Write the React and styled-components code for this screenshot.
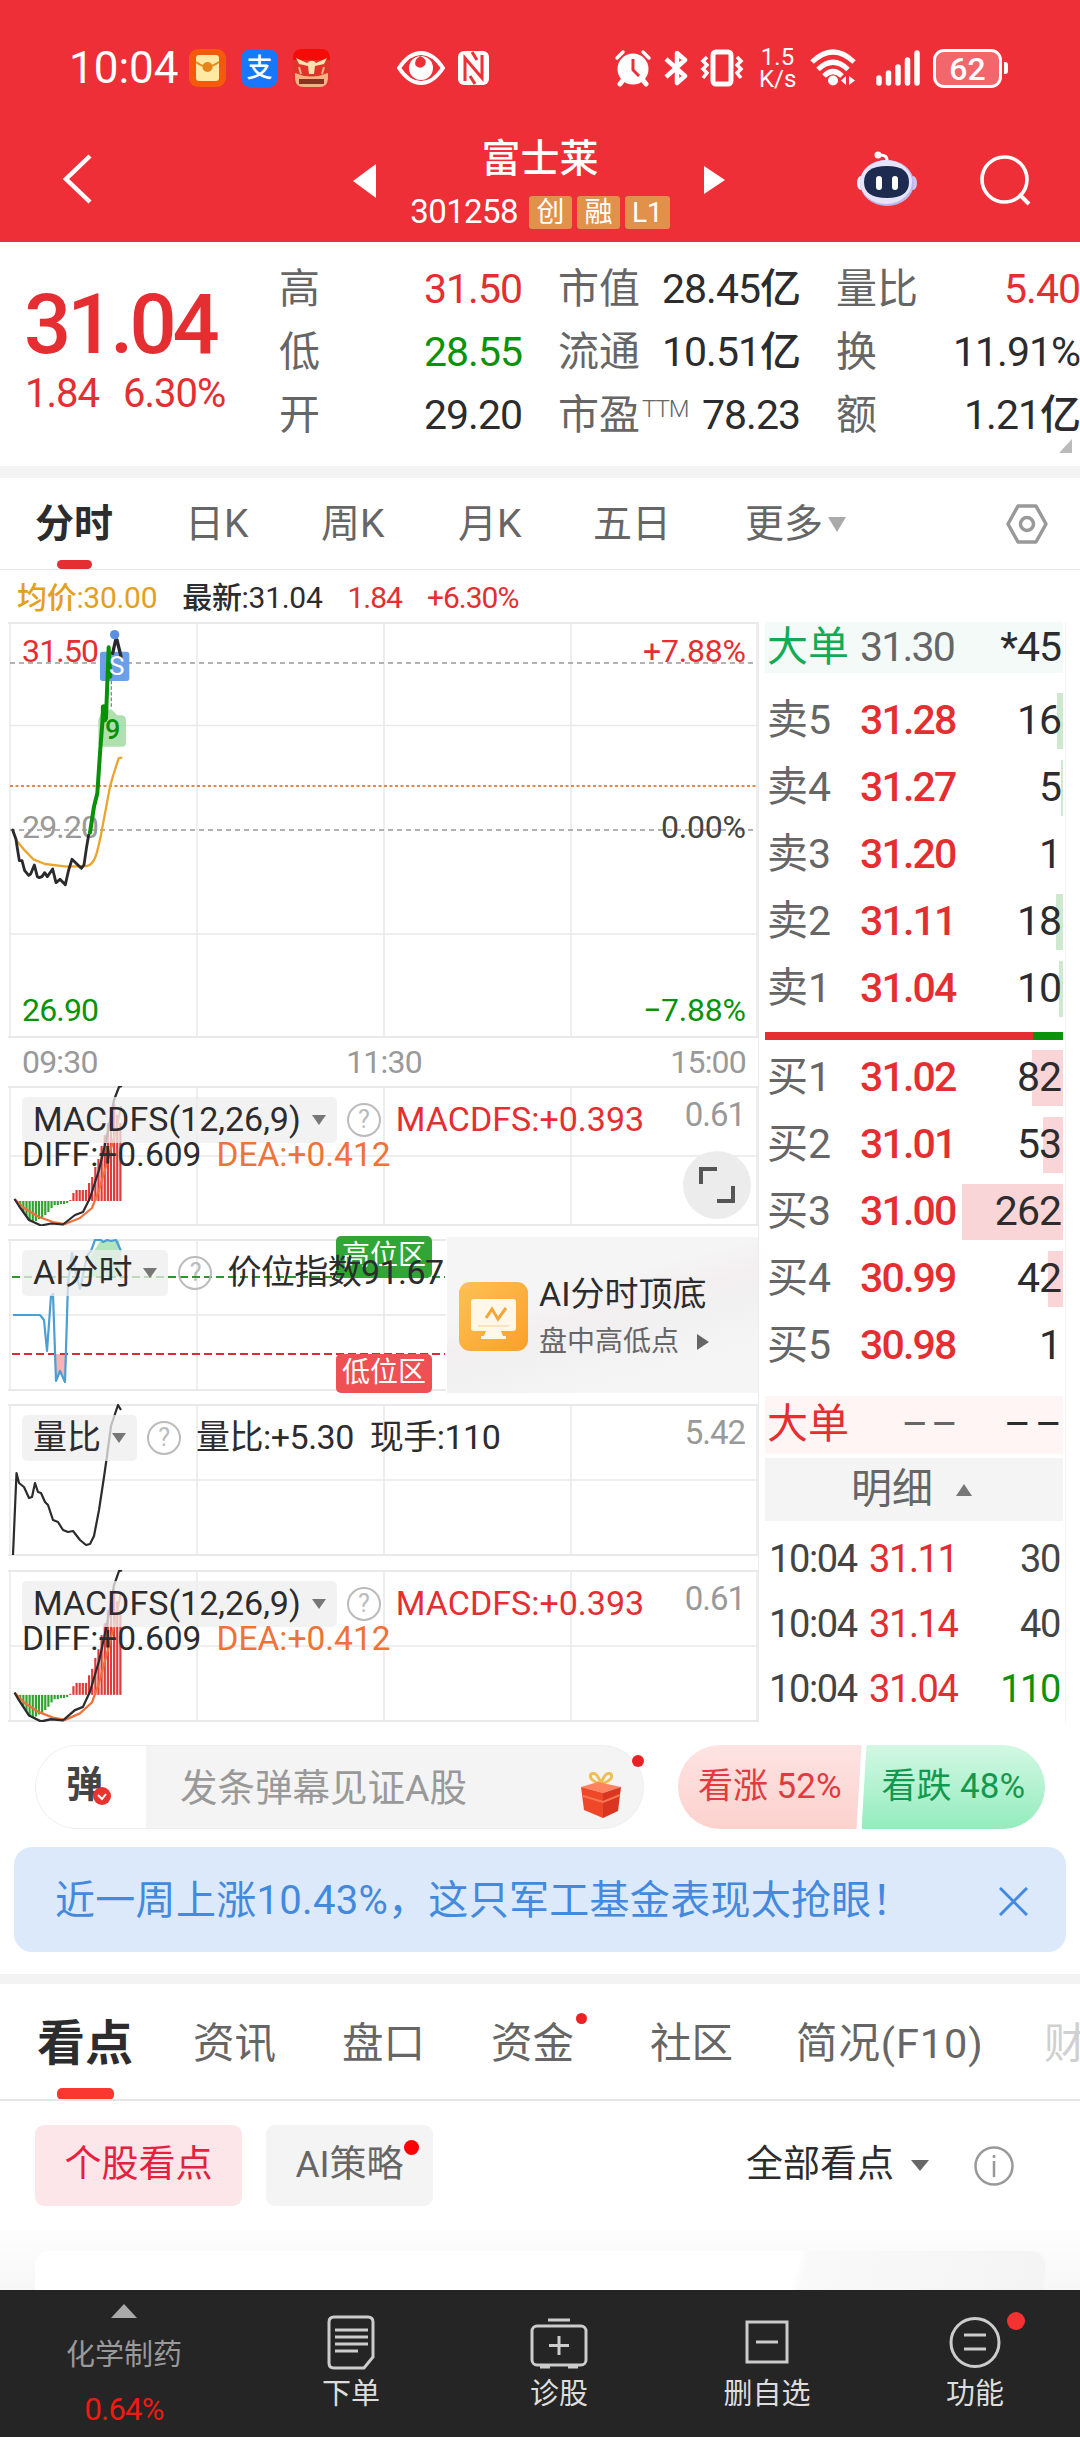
import styled, { createGlobalStyle } from 'styled-components'

const RED = '#e52e31'
const GREEN = '#0a930a'
const DARK = '#2c2c2e'
const GREY = '#666'

const GlobalStyle = createGlobalStyle`
  * {
    box-sizing: border-box;
  }
  body {
    margin: 0;
    background: #fff;
    font-family: Roboto, "Noto Sans CJK SC", sans-serif;
    line-height: 1.2;
    color: ${DARK};
  }
  svg {
    display: block;
    flex: none;
  }
`

const Page = styled.div`
  width: 1080px;
  height: 2437px;
  overflow: hidden;
  display: flex;
  flex-direction: column;
`

/* ---------- header ---------- */

const Header = styled.header`
  height: 242px;
  flex: none;
  background: #ee2f37;
  color: #fff;
`

const StatusBar = styled.div`
  height: 88px;
  padding: 48px 72px 0 69px;
  display: flex;
  align-items: center;
`

const Clock = styled.div`
  width: 120px;
  font-size: 44px;
  line-height: 40px;
  font-weight: 450;
`

const AppIcons = styled.div`
  display: flex;
  gap: 15px;
  width: 208px;
`

const StatusIcons = styled.div`
  display: flex;
  align-items: center;
  gap: 12px;
`

const RightIcons = styled(StatusIcons)`
  margin-left: auto;
`

const Speed = styled.div`
  font-size: 24px;
  font-weight: 450;
  line-height: 22px;
  text-align: center;
  width: 37px;
  margin: 0 2px 0 3px;
`

const SignalWrap = styled.div`
  margin-left: 7px;
`

const Battery = styled.div`
  width: 69px;
  height: 39px;
  border: 3px solid #fff;
  border-radius: 11px;
  background: #f3666c;
  font-size: 32px;
  font-weight: 500;
  line-height: 34px;
  text-align: center;
`

const BatteryTip = styled.div`
  width: 4px;
  height: 12px;
  margin-left: 2px;
  border-radius: 0 3px 3px 0;
  background: #fff;
`

const BatteryWrap = styled.div`
  display: flex;
  align-items: center;
`

const TitleBar = styled.div`
  height: 154px;
  padding: 45px 49px 0 62px;
  display: flex;
`

const IconSlot = styled.div`
  width: ${props => props.$w}px;
  padding-top: ${props => props.$top}px;
`

const StockTitle = styled.div`
  width: 328px;
  text-align: center;
`

const StockName = styled.div`
  font-size: 39px;
  font-weight: 500;
  line-height: 52px;
`

const StockCode = styled.div`
  display: flex;
  justify-content: center;
  align-items: center;
  gap: 5px;
  font-size: 33px;
  font-weight: 450;
  line-height: 34px;
  padding-top: 10px;
  letter-spacing: -0.6px;
  height: 44px;
`

const Badge = styled.span`
  min-width: 43px;
  height: 33px;
  padding: 0 7px;
  border-radius: 3px;
  background: #e1914a;
  font-size: 28px;
  font-weight: 400;
  line-height: 34px;
  letter-spacing: 0;
  &:first-of-type {
    margin-left: 6px;
  }
`

/* ---------- quote ---------- */

const Quote = styled.section`
  height: 224px;
  flex: none;
  display: flex;
  padding-top: 16px;
  position: relative;
`

const PriceBlock = styled.div`
  width: 279px;
  padding: 22px 0 0 24px;
  color: ${RED};
`

const Price = styled.div`
  font-size: 83px;
  font-weight: 500;
  line-height: 90px;
  letter-spacing: -4px;
`

const Change = styled.div`
  display: flex;
  gap: 24px;
  font-size: 40px;
  font-weight: 450;
  line-height: 48px;
  letter-spacing: -1px;
  padding-left: 1px;
`

const QuoteGrid = styled.div`
  display: grid;
  grid-template-columns: 242px 241px 243px;
  grid-auto-rows: 63px;
  column-gap: 37px;
`

const Cell = styled.div`
  display: flex;
  justify-content: space-between;
  align-items: center;
  font-size: 41px;
  white-space: nowrap;
`

const CellLabel = styled.span`
  color: ${GREY};
  sup {
    font-size: 24px;
    line-height: 0;
    vertical-align: 12px;
    margin-left: 2px;
    letter-spacing: -1px;
    font-weight: 300;
  }
`

const CellValue = styled.span`
  color: ${props => props.$color || DARK};
  font-size: 41px;
  font-weight: 450;
  letter-spacing: -1px;
  margin-right: -1px;
`

const Corner = styled.div`
  position: absolute;
  right: 8px;
  bottom: 13px;
  border-left: 13px solid transparent;
  border-bottom: 14px solid #bbb;
`

const Band = styled.div`
  height: ${props => props.$h}px;
  flex: none;
  background: #f3f3f3;
`

/* ---------- period tabs ---------- */

const PeriodTabs = styled.nav`
  height: 92px;
  flex: none;
  padding-left: 35px;
  display: flex;
  align-items: center;
  border-bottom: 1px solid #e9e9e9;
`

const Period = styled.div`
  width: ${props => props.$w}px;
  height: 91px;
  display: flex;
  align-items: center;
  gap: 5px;
  padding-top: 1px;
  font-size: 39px;
  color: ${props => (props.$active ? DARK : GREY)};
  font-weight: ${props => (props.$active ? 700 : 400)};
  position: relative;
`

const Underline = styled.div`
  position: absolute;
  left: ${props => props.$left}px;
  bottom: ${props => props.$bottom || 0}px;
  width: ${props => props.$w}px;
  height: ${props => props.$h}px;
  border-radius: 5px;
  background: ${props => props.$color};
`

const Triangle = styled.i`
  display: inline-block;
  flex: none;
  border-left: ${props => props.$s}px solid transparent;
  border-right: ${props => props.$s}px solid transparent;
  border-${props => (props.$up ? 'bottom' : 'top')}: ${props => props.$h}px solid ${props => props.$color || '#777'};
`

/* ---------- market area ---------- */

const Market = styled.section`
  height: 1153px;
  flex: none;
  display: flex;
`

const Charts = styled.div`
  width: 758px;
  padding-left: 8px;
`

const Summary = styled.div`
  height: 52px;
  padding: 4px 0 0 9px;
  display: flex;
  align-items: center;
  gap: 25px;
  font-size: 30px;
  font-weight: 450;
  letter-spacing: -0.3px;
`

const Tint = styled.span`
  color: ${props => props.$color};
  letter-spacing: ${props => props.$tight ? '-1px' : 'inherit'};
`

const TimeAxis = styled.div`
  height: 48px;
  padding: 0 12px 0 14px;
  display: flex;
  justify-content: space-between;
  align-items: center;
  font-size: 32px;
  letter-spacing: -0.8px;
  color: #999;
`

const Panel = styled.div`
  position: relative;
  height: ${props => props.$h}px;
  margin-bottom: ${props => props.$gap || 0}px;
`

const Overlay = styled.div`
  position: absolute;
  inset: 0;
  padding: 10px 13px 0 14px;
`

const OverlayRow = styled.div`
  display: flex;
  align-items: center;
  height: 47px;
  font-size: 34px;
  letter-spacing: ${props => props.$ls || 0}px;
  white-space: nowrap;
`

const Chip = styled.div`
  height: 46px;
  padding: 0 11px;
  display: flex;
  align-items: center;
  gap: 11px;
  border-radius: 5px;
  background: rgba(238, 238, 238, 0.75);
  margin-right: 10px;
  letter-spacing: 0;
`

const Help = styled.div`
  width: 34px;
  height: 34px;
  flex: none;
  border: 2px solid #bbb;
  border-radius: 50%;
  color: #bbb;
  font-size: 25px;
  line-height: 30px;
  text-align: center;
  margin-right: 15px;
`

const MaxValue = styled.span`
  margin-left: auto;
  font-size: 33px;
  color: #999;
  letter-spacing: -1px;
  padding-bottom: 9px;
`

const DiffRow = styled.div`
  display: flex;
  gap: 15px;
  font-size: 33.5px;
  line-height: 24px;
`

const Expand = styled.div`
  position: absolute;
  right: 7px;
  top: 65px;
  width: 68px;
  height: 68px;
  border-radius: 50%;
  background: #ececec;
  display: flex;
  align-items: center;
  justify-content: center;
`

const AiPanel = styled.div`
  position: relative;
  display: flex;
  height: 152px;
  margin: 13px 0;
`

const Zone = styled.div`
  position: absolute;
  left: 328px;
  top: ${props => props.$top}px;
  width: 96px;
  height: ${props => props.$h}px;
  border-radius: 5px;
  background: ${props => props.$color};
  color: #fff;
  font-size: 28px;
  line-height: ${props => props.$h - 2}px;
  text-align: center;
`

const Promo = styled.div`
  width: 311px;
  height: 156px;
  margin-top: -2px;
  padding: 2px 0 0 12px;
  display: flex;
  align-items: center;
  gap: 11px;
  background: linear-gradient(165deg, #f5f5f5 35%, #f3eff0 48%, #f1f1f1 60%, #f5f5f5 80%);
`

const PromoText = styled.div`
  padding-top: 4px;
`

const PromoTitle = styled.div`
  font-size: 34px;
  line-height: 48px;
  white-space: nowrap;
`

const PromoSub = styled.div`
  display: flex;
  align-items: center;
  gap: 18px;
  font-size: 28px;
  line-height: 48px;
  color: ${GREY};
`

const Play = styled.i`
  border-top: 8px solid transparent;
  border-bottom: 8px solid transparent;
  border-left: 12px solid #666;
`

/* ---------- order book ---------- */

const Book = styled.div`
  width: 308px;
  margin-top: 52px;
  padding: 0 2px 0 6px;
  border-left: 1px solid #ececec;
  border-right: 1px solid #f3f3f3;
`

const BigOrder = styled.div`
  height: ${props => props.$h}px;
  margin: ${props => props.$margin};
  background: ${props => props.$bg};
  padding: 0 2px;
  display: flex;
  align-items: center;
  font-size: 41px;
`

const Level = styled.div`
  height: 67px;
  padding: 0 2px;
  display: flex;
  align-items: center;
  font-size: 41px;
  position: relative;
`

const Side = styled.span`
  width: 93px;
  white-space: nowrap;
  color: ${props => props.$color || GREY};
`

const LevelPrice = styled.span`
  width: 96px;
  font-size: 41px;
  letter-spacing: -1.8px;
  font-weight: ${props => (props.$color ? 400 : 500)};
  color: ${props => props.$color || RED};
  white-space: nowrap;
`

const EmptyPrice = styled(LevelPrice)`
  text-align: right;
  word-spacing: -4px;
`

const Volume = styled.span`
  margin-left: auto;
  font-size: 41px;
  font-weight: 450;
  letter-spacing: -1px;
  word-spacing: -4px;
  position: relative;
`

const DepthBar = styled.div`
  position: absolute;
  right: 0;
  top: 6px;
  height: 56px;
  background: ${props => props.$color};
`

const Ratio = styled.div`
  height: 8px;
  margin: 10px 0 4px;
  display: flex;
  background: ${GREEN};
`

const RatioBuy = styled.div`
  width: 268px;
  background: ${RED};
`

const DetailHead = styled.div`
  height: 63px;
  margin-bottom: 5px;
  padding-right: 5px;
  background: #f4f4f4;
  display: flex;
  align-items: center;
  justify-content: center;
  gap: 23px;
  font-size: 41px;
  color: ${GREY};
`

const Trade = styled.div`
  height: 65px;
  padding: 2px 3px 0 4px;
  display: flex;
  align-items: center;
  font-size: 38px;
  font-weight: 450;
  letter-spacing: -1.4px;
  color: #444;
`

const TradeCell = styled.span`
  width: ${props => props.$w}px;
  margin-left: ${props => (props.$w ? 0 : 'auto')};
  color: ${props => props.$color};
`

/* ---------- comment bar and banner ---------- */

const CommentRow = styled.div`
  height: 84px;
  margin-top: 22px;
  padding: 0 35px;
  display: flex;
  justify-content: space-between;
  flex: none;
`

const CommentBox = styled.div`
  width: 609px;
  display: flex;
  border: 1px solid #eee;
  border-radius: 42px;
  background: #f4f4f4;
  position: relative;
`

const Danmu = styled.div`
  width: 110px;
  border-radius: 42px 0 0 42px;
  background: #fff;
  padding-left: 30px;
  font-size: 37px;
  font-weight: 700;
  line-height: 79px;
  color: #444;
  position: relative;
`

const DanmuCheck = styled.div`
  position: absolute;
  left: 57px;
  top: 41px;
`

const Placeholder = styled.div`
  flex: 1;
  padding-left: 34px;
  font-size: 37.5px;
  line-height: 85px;
  color: #999;
`

const Gift = styled.div`
  padding: 26px 21px 0 0;
`

const Dot = styled.i`
  position: absolute;
  left: ${props => props.$x}px;
  top: ${props => props.$y}px;
  width: ${props => props.$s}px;
  height: ${props => props.$s}px;
  border-radius: 50%;
  background: ${props => props.$color || '#ea2226'};
`

const Votes = styled.div`
  display: flex;
  width: 367px;
  border-radius: 42px;
  overflow: hidden;
`

const Vote = styled.div`
  flex: 1;
  font-size: 35px;
  line-height: 83px;
  text-align: center;
  color: ${props => (props.$up ? '#e33a40' : '#12994f')};
  background: ${props => (props.$up ? 'linear-gradient(#fee3e3, #fbd2cd)' : 'linear-gradient(#d3f8e4, #93ecbd)')};
  clip-path: ${props => (props.$up
    ? 'polygon(0 0, 100% 0, calc(100% - 5px) 100%, 0 100%)'
    : 'polygon(5px 0, 100% 0, 100% 100%, 0 100%)')};
`

const Banner = styled.div`
  height: 105px;
  margin: 18px 14px 22px;
  padding: 3px 38px 0 41px;
  flex: none;
  display: flex;
  align-items: center;
  justify-content: space-between;
  border-radius: 18px;
  background: #dbe9fa;
  color: #4389de;
  font-size: 40px;
  letter-spacing: 0.3px;
  white-space: nowrap;
`

/* ---------- lower tabs ---------- */

const TopicTabs = styled.nav`
  height: 117px;
  flex: none;
  padding-left: 37px;
  display: flex;
  border-bottom: 2px solid #e6e6e6;
  overflow: hidden;
`

const Topic = styled.div`
  width: ${props => props.$w}px;
  flex: none;
  position: relative;
  font-size: ${props => (props.$active ? 48 : 41.5)}px;
  font-weight: ${props => (props.$active ? 700 : 400)};
  line-height: 120px;
  color: ${props => (props.$faded ? '#d0d0d0' : props.$active ? DARK : GREY)};
  letter-spacing: ${props => (props.$wide ? 0.9 : 0)}px;
  white-space: nowrap;
`

const Filters = styled.div`
  height: 130px;
  flex: none;
  padding: 24px 66px 0 35px;
  display: flex;
  align-items: flex-start;
`

const FilterChip = styled.div`
  width: ${props => props.$w}px;
  height: 81px;
  margin-right: 24px;
  border-radius: 9px;
  background: ${props => (props.$active ? '#fde6ea' : '#f4f4f4')};
  color: ${props => (props.$active ? '#e6203f' : GREY)};
  font-size: 37px;
  line-height: 80px;
  text-align: center;
  position: relative;
`

const Sort = styled.div`
  height: 81px;
  margin-left: auto;
  margin-right: 45px;
  display: flex;
  align-items: center;
  gap: 17px;
  font-size: 37px;
`

const Info = styled.div`
  margin-top: 21px;
`

const CardArea = styled.div`
  flex: 1;
  padding: 20px 35px 0;
  background: linear-gradient(#fdfdfd, #f7f7f7);
`

const Card = styled.div`
  height: 100%;
  border-radius: 14px 14px 0 0;
  background: linear-gradient(105deg, #fff 75%, #f9f9f9 76%, #f4f4f4);
`

/* ---------- bottom bar ---------- */

const BottomBar = styled.footer`
  height: 147px;
  flex: none;
  background: #252525;
  color: #ddd;
  display: flex;
`

const Sector = styled.div`
  width: 248px;
  padding-top: 14px;
  display: flex;
  flex-direction: column;
  align-items: center;
`

const SectorName = styled.div`
  font-size: 29px;
  line-height: 40px;
  margin-top: 17px;
  color: #999;
`

const SectorChange = styled.div`
  font-size: 31px;
  line-height: 40px;
  margin-top: 15px;
  letter-spacing: -0.8px;
  color: #f01a12;
`

const Action = styled.div`
  flex: 1;
  padding: 24px 2px 0 0;
  display: flex;
  flex-direction: column;
  align-items: center;
  gap: 3px;
  font-size: 29px;
  line-height: 42px;
  position: relative;
`

const periods = [
  ['分时', 150],
  ['日K', 136],
  ['周K', 137],
  ['月K', 135],
  ['五日', 152],
]

const topics = [
  ['看点', 156],
  ['资讯', 149],
  ['盘口', 149],
  ['资金', 159],
  ['社区', 146],
  ['简况(F10)', 248],
  ['财', 90],
]

const sells = [
  ['卖5', '31.28', '16', 6],
  ['卖4', '31.27', '5', 2],
  ['卖3', '31.20', '1', 0],
  ['卖2', '31.11', '18', 7],
  ['卖1', '31.04', '10', 4],
]

const buys = [
  ['买1', '31.02', '82', 31],
  ['买2', '31.01', '53', 20],
  ['买3', '31.00', '262', 101],
  ['买4', '30.99', '42', 15],
  ['买5', '30.98', '1', 0],
]

const trades = [
  ['31.11', '30', '#444'],
  ['31.14', '40', '#444'],
  ['31.04', '110', GREEN],
]

const macdBars = [
  -2, -5, -11, -15, -19, -21, -20, -18, -17, -14, -11, -7, -4, -4, -3, -3, -2,
  1, 8, 11, 11, 11, 11, 18, 24, 34, 42, 55, 66, 78, 90, 97, 86, 78,
]

const Grid = ({ w = 750, h, rows = [] }) => (
  <g stroke="#e9e9e9" strokeWidth="1.5" fill="none">
    <path d={`M0 1H${w}M0 ${h - 1}H${w}`} strokeWidth="2" />
    {[2, 189, 376, 563, 749].filter(x => x <= w).map(x => <path key={x} d={`M${x} 0V${h}`} />)}
    {rows.map(y => <path key={y} d={`M2 ${y}H${w}`} />)}
  </g>
)

const PriceChart = () => (
  <svg width="750" height="416" viewBox="0 0 750 416" fontFamily="Roboto" fontSize="32" fontWeight="450">
    <Grid h={416} rows={[103.5, 312]} />
    <path d="M2 41H748M2 208H748" stroke="#999" strokeWidth="1.5" strokeDasharray="5 4" />
    <path d="M2 164H748" stroke="#e08a50" strokeWidth="2" strokeDasharray="3 2.5" />
    <text x="14" y="40" fill={RED} textLength="77">31.50</text>
    <text x="14" y="216" fill="#999" textLength="77">29.20</text>
    <g transform="translate(-8 -12) scale(.3333)" fill="none" strokeLinejoin="round" strokeLinecap="round">
      <path d="M306 300L334 298L352 316H366Q378 318 378 330V398Q378 410 366 410H307Q295 410 295 398V330Z" fill="#8ed38e" opacity=".7" />
      <path d="M334 213V298" stroke="#888" strokeWidth="4" strokeDasharray="8 9" />
      <path d="M48 690L75 722L100 748L135 762L200 770L262 768C288 760 292 720 302 680L330 530L340 495L356 445L364 443" stroke="#eaa52c" strokeWidth="7" />
      <path d="M38 660L48 688L52 715L58 752L66 752L74 782L86 796L92 792L103 765L112 800L118 803L126 800L134 788L142 800L158 777L168 818L180 808L196 824L206 780L216 748L244 775L252 765L260 710L266 675" stroke="#2a2a2e" strokeWidth="8.5" />
      <rect x="300" y="125" width="88" height="88" rx="8" fill="#6c9fe9" />
      <path d="M338 130L347 90L351 90L363 140" stroke="#2a2a2e" strokeWidth="10" />
      <path d="M270 668L282 590L292 550L300 430L310 300L318 325L326 112L331 200" stroke="#099009" strokeWidth="12" />
      <path d="M312 292V328" stroke="#099009" strokeWidth="19" />
      <circle cx="344" cy="74" r="14" fill="#5b8fe2" stroke="none" />
    </g>
    <text x="101" y="53" fontSize="26" fill="#fff">S</text>
    <text x="97" y="117" fontSize="27" fontWeight="500" fill="#099009">9</text>
    <g textAnchor="end">
      <text x="738" y="40" fill={RED} textLength="103">+7.88%</text>
      <text x="738" y="216" fill="#444" textLength="85">0.00%</text>
      <text x="738" y="399" fill={GREEN} textLength="103">−7.88%</text>
    </g>
    <text x="14" y="399" fill={GREEN} textLength="77">26.90</text>
  </svg>
)

const Macd = ({ h }) => (
  <Panel $h={h}>
    <svg width="750" height={h} viewBox={`0 0 750 ${h}`}>
      <Grid h={h} rows={[h / 2]} />
      <g transform={`scale(1 ${h / 140})`} fill="none" strokeLinejoin="round">
        {macdBars.map((v, i) => (
          <rect
            key={i}
            x={8 + i * 3.13}
            y={v < 0 ? 115 : 115 - v}
            width="2.2"
            height={Math.abs(v)}
            fill={v < 0 ? '#2fa52f' : '#de3b3b'}
          />
        ))}
        <path d="M6.500 113L16 122L31 131L45 136L57 138L72 132L84 122L91 104L101 70L108 44L113 20" stroke="#f0703a" strokeWidth="2.2" />
        <path d="M6.500 113L11 120L21 134L33 139.500L43 137.500L55 138.500L67 129L75 126L82 112L91 84L99 50L106 14L111 1L114 0" stroke="#2c2c2e" strokeWidth="2.2" />
      </g>
    </svg>
    <Overlay>
      <OverlayRow>
        <Chip>
          MACDFS(12,26,9)
          <Triangle $s={7} $h={10} />
        </Chip>
        <Help>?</Help>
        <Tint $color={RED}>MACDFS:+0.393</Tint>
        <MaxValue>0.61</MaxValue>
      </OverlayRow>
      <DiffRow>
        <span>DIFF:+0.609</span>
        <Tint $color="#ee7338">DEA:+0.412</Tint>
      </DiffRow>
    </Overlay>
  </Panel>
)

const AiChart = () => (
  <svg width="439" height="152" viewBox="0 0 439 152">
    <Grid w={438} h={152} rows={[76]} />
    <path d="M80 38L83 16L86 12L92 2H93L101 0L105 2L111 1L113 13V38Z" fill="#b4e6bd" />
    <path d="M46 115L48 142L52 132L57 143L59 115Z" fill="#f8b4b4" />
    <path d="M4 38H437" stroke="#2c962c" strokeWidth="2" strokeDasharray="8 4" />
    <path d="M4 115H437" stroke="#db2b35" strokeWidth="2" strokeDasharray="8 4" />
    <path
      d="M5 76H32L36 81L39 112L43 57L45 55L48 142L52 132L57 143L60 44L64 14L67 30L72 50L79 17L83 12L87 1L93 1L95 3L99 1L103 2L108 1L113 12"
      fill="none"
      stroke="#4a9fd4"
      strokeWidth="2.2"
      strokeLinejoin="round"
    />
  </svg>
)

const VolumeRatio = () => (
  <Panel $h={152} $gap={14}>
    <svg width="750" height="152" viewBox="0 0 750 152">
      <Grid h={152} rows={[76]} />
      <path
        d="M5 151L8.500 69L11 79L16 83L21 94L24 93L27 79L30 88L33 89L37 98L40 101L45 116L50 118L55 126L60 128L65 127L72 136L78 141L82 140L86 132L91 106L96 73L99 52L103 22L110 1L113 6"
        fill="none"
        stroke="#2c2c2e"
        strokeWidth="2.2"
        strokeLinejoin="round"
      />
    </svg>
    <Overlay>
      <OverlayRow $ls={-0.5}>
        <Chip>
          量比
          <Triangle $s={7} $h={10} />
        </Chip>
        <Help>?</Help>
        <span>量比:+5.30&nbsp; 现手:110</span>
        <MaxValue>5.42</MaxValue>
      </OverlayRow>
    </Overlay>
  </Panel>
)

const Levels = ({ rows, color }) => rows.map(([side, price, volume, bar]) => (
  <Level key={side}>
    <DepthBar $color={color} style={{ width: bar }} />
    <Side>{side}</Side>
    <LevelPrice>{price}</LevelPrice>
    <Volume>{volume}</Volume>
  </Level>
))

const StatusRow = () => (
  <StatusBar>
    <Clock>10:04</Clock>
    <AppIcons>
      <svg width="37" height="38" viewBox="0 0 37 38">
        <rect width="37" height="38" rx="9" fill="#f45a0a" />
        <rect x="7" y="6" width="23" height="26" rx="3" fill="#ffe9a5" />
        <path d="M7 13Q18 22 30 13" fill="none" stroke="#e38d24" strokeWidth="2" />
        <circle cx="18.500" cy="18" r="5" fill="#e5851b" />
      </svg>
      <svg width="37" height="38" viewBox="0 0 37 38">
        <rect width="37" height="38" rx="9" fill="#1677ff" />
        <text x="18.500" y="28" fontSize="26" fontWeight="500" fill="#fff" textAnchor="middle" fontFamily="Noto Sans CJK SC">支</text>
      </svg>
      <svg width="37" height="38" viewBox="0 0 37 38">
        <rect width="37" height="38" rx="9" fill="#e0332a" />
        <path d="M0 11V9Q0 0 9 0H28Q37 0 37 9V11Z" fill="#f50b08" />
        <path d="M3 9L14 14L17 12H21L23 14L34 9L31 15L22 17L21 25H16L15 17L6 15Z" fill="#ffe0b0" />
        <path d="M6 18L8 25M31 18L29 25" stroke="#f4b183" strokeWidth="2" />
        <path d="M2 24Q18 31 35 24V30Q34 38 27 38H10Q3 38 2 30Z" fill="#f4b183" />
        <rect x="6" y="30" width="25" height="5" fill="#8a3320" />
      </svg>
    </AppIcons>
    <StatusIcons>
      <svg width="48" height="36" viewBox="0 0 48 36">
        <path d="M2 18Q12 3 24 3Q36 3 46 18Q36 33 24 33Q12 33 2 18Z" fill="none" stroke="#fff" strokeWidth="4" />
        <circle cx="24" cy="18" r="12" fill="#fff" />
        <path d="M23 6Q31 9 28 15Q24 20 19 16Q16 11 23 6Z" fill="#ee2f37" />
      </svg>
      <svg width="33" height="36" viewBox="0 0 33 36">
        <rect x="1" y="1" width="31" height="34" rx="6" fill="#fff" />
        <path d="M8 31V8L25 28V5M15 2L20 10M13 26L18 34" stroke="#ee2f37" strokeWidth="3" fill="none" />
      </svg>
    </StatusIcons>
    <RightIcons>
      <svg width="38" height="38" viewBox="0 0 38 38">
        <circle cx="19" cy="20" r="15.500" fill="#fff" />
        <path d="M3 9L9 3M35 9L29 3" stroke="#fff" strokeWidth="3.500" strokeLinecap="round" />
        <path d="M10 30L6 35M28 30L32 35" stroke="#fff" strokeWidth="5" strokeLinecap="round" />
        <path d="M19 10V21L25 27" fill="none" stroke="#ee2f37" strokeWidth="3" />
      </svg>
      <svg width="24" height="38" viewBox="0 0 24 38">
        <path d="M2 10L21 27L13 34V4L21 11L2 28" fill="none" stroke="#fff" strokeWidth="4.500" strokeLinejoin="round" />
      </svg>
      <svg width="44" height="38" viewBox="0 0 44 38">
        <rect x="13" y="3" width="18" height="32" rx="3" fill="none" stroke="#fff" strokeWidth="5" />
        <path d="M7 8L3 12L7 16L3 20L7 24L3 29M37 8L41 12L37 16L41 20L37 24L41 29" fill="none" stroke="#fff" strokeWidth="3.500" />
      </svg>
      <Speed>1.5<br />K/s</Speed>
      <svg width="46" height="38" viewBox="0 0 46 38">
        <path d="M2 13Q23 -7 44 13M8 20.500Q23 6 38 20.500M14 27Q23 18 32 27" fill="none" stroke="#fff" strokeWidth="5" />
        <circle cx="23" cy="31.500" r="5" fill="#fff" />
        <path d="M36 27L31 31.500L36 36ZM39 27L45 31.500L39 36Z" fill="#fff" />
      </svg>
      <SignalWrap>
        <svg width="46" height="38" viewBox="0 0 46 38">
          <path d="M4 29V34M13.500 24V34M23 18V34M32.500 11V34M42 4V34" stroke="#fff" strokeWidth="5.500" strokeLinecap="round" />
        </svg>
      </SignalWrap>
      <BatteryWrap>
        <Battery>62</Battery>
        <BatteryTip />
      </BatteryWrap>
    </RightIcons>
  </StatusBar>
)

const App = () => {
  return (
    <Page>
      <GlobalStyle />
      <Header>
        <StatusRow />
        <TitleBar>
          <IconSlot $w={291} $top={20}>
            <svg width="32" height="52" viewBox="0 0 32 52">
              <path d="M28 3L4 26L28 49" fill="none" stroke="#fff" strokeWidth="4.500" />
            </svg>
          </IconSlot>
          <IconSlot $w={23} $top={31}>
            <svg width="23" height="34" viewBox="0 0 23 34"><path d="M23 0V34L0 17Z" fill="#fff" /></svg>
          </IconSlot>
          <StockTitle>
            <StockName>富士莱</StockName>
            <StockCode>
              301258
              <Badge>创</Badge>
              <Badge>融</Badge>
              <Badge>L1</Badge>
            </StockCode>
          </StockTitle>
          <IconSlot $w={153} $top={33}>
            <svg width="21" height="28" viewBox="0 0 21 28"><path d="M0 0V28L21 14Z" fill="#fff" /></svg>
          </IconSlot>
          <IconSlot $w={123} $top={18}>
            <svg width="60" height="56" viewBox="0 0 60 56">
              <path d="M30 11Q31 3 21 4" fill="none" stroke="#fff" strokeWidth="3" strokeLinecap="round" />
              <circle cx="21" cy="4" r="3.500" fill="#fff" />
              <ellipse cx="4" cy="32" rx="4" ry="7" fill="#f3f0ff" />
              <ellipse cx="56" cy="32" rx="4" ry="7" fill="#c9c6f2" />
              <ellipse cx="30" cy="32" rx="27" ry="23" fill="#b9bbee" />
              <ellipse cx="29" cy="31" rx="26" ry="22" fill="#e6e3fb" />
              <path d="M30 15Q52 15 52 31Q52 47 30 47Q7 47 7 31Q7 15 30 15Z" fill="#1d2b50" />
              <path d="M22 28V36M38 28V36" stroke="#fff" strokeWidth="6" strokeLinecap="round" />
            </svg>
          </IconSlot>
          <IconSlot $w={50} $top={22}>
            <svg width="51" height="51" viewBox="0 0 51 51">
              <circle cx="24.500" cy="24.500" r="22.500" fill="none" stroke="#fff" strokeWidth="3.600" />
              <path d="M39 39L49 49" stroke="#fff" strokeWidth="4" />
            </svg>
          </IconSlot>
        </TitleBar>
      </Header>

      <Quote>
        <PriceBlock>
          <Price>31.04</Price>
          <Change>
            <span>1.84</span>
            <span>6.30%</span>
          </Change>
        </PriceBlock>
        <QuoteGrid>
          <Cell><CellLabel>高</CellLabel><CellValue $color={RED}>31.50</CellValue></Cell>
          <Cell><CellLabel>市值</CellLabel><CellValue>28.45亿</CellValue></Cell>
          <Cell><CellLabel>量比</CellLabel><CellValue $color={RED}>5.40</CellValue></Cell>
          <Cell><CellLabel>低</CellLabel><CellValue $color={GREEN}>28.55</CellValue></Cell>
          <Cell><CellLabel>流通</CellLabel><CellValue>10.51亿</CellValue></Cell>
          <Cell><CellLabel>换</CellLabel><CellValue>11.91%</CellValue></Cell>
          <Cell><CellLabel>开</CellLabel><CellValue>29.20</CellValue></Cell>
          <Cell><CellLabel>市盈<sup>TTM</sup></CellLabel><CellValue>78.23</CellValue></Cell>
          <Cell><CellLabel>额</CellLabel><CellValue>1.21亿</CellValue></Cell>
        </QuoteGrid>
        <Corner />
      </Quote>
      <Band $h={12} />

      <PeriodTabs>
        {periods.map(([name, w], i) => (
          <Period key={name} $w={w} $active={i === 0}>
            {name}
            {i === 0 && <Underline $left={22} $w={35} $h={9} $color={RED} />}
          </Period>
        ))}
        <Period $w={261}>
          更多
          <Triangle $s={9} $h={15} $color="#aaa" />
        </Period>
        <svg width="42" height="40" viewBox="0 0 42 40" fill="none" stroke="#999" strokeWidth="3.500">
          <path d="M12 2H30L40 20L30 38H12L2 20Z" strokeLinejoin="round" />
          <circle cx="21" cy="20" r="6.500" />
        </svg>
      </PeriodTabs>

      <Market>
        <Charts>
          <Summary>
            <Tint $color="#e3a01f">均价:30.00</Tint>
            <span>最新:31.04</span>
            <Tint $color={RED} $tight>1.84</Tint>
            <Tint $color={RED} $tight>+6.30%</Tint>
          </Summary>
          <PriceChart />
          <TimeAxis>
            <span>09:30</span>
            <span>11:30</span>
            <span>15:00</span>
          </TimeAxis>
          <Panel $h={140}>
            <Macd h={140} />
            <Expand>
              <svg width="36" height="36" viewBox="0 0 36 36">
                <path d="M2 17V2H18M34 19V34H18" fill="none" stroke="#555" strokeWidth="4" />
              </svg>
            </Expand>
          </Panel>
          <AiPanel>
            <AiChart />
            <Zone $top={-3} $h={42} $color="#32a537">高位区</Zone>
            <Zone $top={115} $h={39} $color="#ee5053">低位区</Zone>
            <Overlay>
              <OverlayRow $ls={-0.6}>
                <Chip>
                  AI分时
                  <Triangle $s={7} $h={10} />
                </Chip>
                <Help>?</Help>
                价位指数91.67
              </OverlayRow>
            </Overlay>
            <Promo>
              <svg width="69" height="69" viewBox="0 0 69 69">
                <defs>
                  <linearGradient id="promo" x2="1" y2="1">
                    <stop stopColor="#fdc153" />
                    <stop offset="1" stopColor="#fba02b" />
                  </linearGradient>
                </defs>
                <rect width="69" height="69" rx="11" fill="url(#promo)" />
                <rect x="12" y="17" width="45" height="32" rx="3" fill="#fff8e9" />
                <path d="M27 49H42L44 54H47V57H22V54H25Z" fill="#fff8e9" />
                <path d="M27 36L33 27L39 37L47 26" fill="none" stroke="#f4a63a" strokeWidth="3" />
                <path d="M19 44H50" stroke="#fadfb0" strokeWidth="1.500" />
              </svg>
              <PromoText>
                <PromoTitle>AI分时顶底</PromoTitle>
                <PromoSub>盘中高低点<Play /></PromoSub>
              </PromoText>
            </Promo>
          </AiPanel>
          <VolumeRatio />
          <Macd h={152} />
        </Charts>

        <Book>
          <BigOrder $h={51} $margin="0 0 14px" $bg="#f3faf8">
            <Side $color="#12ab55">大单</Side>
            <LevelPrice $color={GREY}>31.30</LevelPrice>
            <Volume>*45</Volume>
          </BigOrder>
          <Levels rows={sells} color="#cfe9cf" />
          <Ratio><RatioBuy /></Ratio>
          <Levels rows={buys} color="#fad5d7" />
          <BigOrder $h={58} $margin="17px 0 4px" $bg="#fff5f5">
            <Side $color={RED}>大单</Side>
            <EmptyPrice $color={GREY}>– –</EmptyPrice>
            <Volume>– –</Volume>
          </BigOrder>
          <DetailHead>
            明细
            <Triangle $up $s={8} $h={12} />
          </DetailHead>
          {trades.map(([price, volume, color]) => (
            <Trade key={price}>
              <TradeCell $w={100}>10:04</TradeCell>
              <TradeCell $w={95} $color={RED}>{price}</TradeCell>
              <TradeCell $color={color}>{volume}</TradeCell>
            </Trade>
          ))}
        </Book>
      </Market>

      <CommentRow>
        <CommentBox>
          <Danmu>
            弹
            <DanmuCheck>
              <svg width="18" height="18" viewBox="0 0 18 18">
                <circle cx="9" cy="9" r="9" fill="#e8332e" />
                <path d="M5 8L9 12L13 7" fill="none" stroke="#fff" strokeWidth="2" />
              </svg>
            </DanmuCheck>
          </Danmu>
          <Placeholder>发条弹幕见证A股</Placeholder>
          <Gift>
            <svg width="42" height="46" viewBox="0 0 42 46">
              <path d="M21 12Q8 8 11 2Q17 -1 21 12Q25 -1 31 2Q34 8 21 12Z" fill="none" stroke="#efbf55" strokeWidth="3" />
              <path d="M1 15L18 10L41 15L23 21Z" fill="#ff8261" />
              <path d="M1 15L23 21V46L4 38Z" fill="#ee4829" />
              <path d="M23 21L41 15L38 39L23 46Z" fill="#d93520" />
              <path d="M3 24L23 30L40 23" fill="none" stroke="#fa7550" strokeWidth="2" />
            </svg>
          </Gift>
          <Dot $x={596} $y={9} $s={12} />
        </CommentBox>
        <Votes>
          <Vote $up>看涨 52%</Vote>
          <Vote>看跌 48%</Vote>
        </Votes>
      </CommentRow>

      <Banner>
        近一周上涨10.43%，这只军工基金表现太抢眼！
        <svg width="29" height="29" viewBox="0 0 29 29">
          <path d="M1 1L28 28M28 1L1 28" stroke="#4389de" strokeWidth="3" />
        </svg>
      </Banner>
      <Band $h={10} />

      <TopicTabs>
        {topics.map(([name, w], i) => (
          <Topic key={name} $w={w} $active={i === 0} $faded={i === 6} $wide={i === 5}>
            {name}
            {i === 0 && <Underline $left={20} $bottom={-1} $w={57} $h={12} $color="#fa3831" />}
            {name === '资金' && <Dot $x={85} $y={29} $s={11} />}
          </Topic>
        ))}
      </TopicTabs>
      <Filters>
        <FilterChip $w={207} $active>个股看点</FilterChip>
        <FilterChip $w={167}>
          AI策略
          <Dot $x={138} $y={15} $s={15} $color="#fa0505" />
        </FilterChip>
        <Sort>
          全部看点
          <Triangle $s={9} $h={11} $color="#666" />
        </Sort>
        <Info>
          <svg width="40" height="40" viewBox="0 0 40 40" fill="none" stroke="#999" strokeWidth="2.500">
            <circle cx="20" cy="20" r="18.500" />
            <path d="M20 9V12M20 15V31" />
          </svg>
        </Info>
      </Filters>
      <CardArea>
        <Card />
      </CardArea>

      <BottomBar>
        <Sector>
          <Triangle $up $s={13} $h={14} $color="#aaa" />
          <SectorName>化学制药</SectorName>
          <SectorChange>0.64%</SectorChange>
        </Sector>
        <Action>
          <svg width="48" height="56" viewBox="0 0 48 56" fill="none" stroke="#ccc" strokeWidth="3">
            <path d="M7 3H41Q46 3 46 8V43L37 54H7Q2 54 2 49V8Q2 3 7 3Z" />
            <path d="M8 16H41M8 23H41M8 30H41M8 37H31" />
          </svg>
          下单
        </Action>
        <Action>
          <svg width="58" height="56" viewBox="0 0 58 56" fill="none" stroke="#ccc" strokeWidth="3">
            <path d="M18 6H40" />
            <rect x="2" y="12" width="54" height="39" rx="5" />
            <path d="M29 22V41M19 31.500H39M10 53H20M38 53H48" />
          </svg>
          诊股
        </Action>
        <Action>
          <svg width="44" height="56" viewBox="0 0 44 56" fill="none" stroke="#ccc" strokeWidth="3">
            <rect x="2" y="8" width="40" height="40" />
            <path d="M11 28H33" />
          </svg>
          删自选
        </Action>
        <Action>
          <svg width="52" height="56" viewBox="0 0 52 56" fill="none" stroke="#ccc" strokeWidth="3">
            <circle cx="26" cy="28.500" r="24" />
            <path d="M15 21H37M15 35H37" />
          </svg>
          功能
          <Dot $x={135} $y={22} $s={18} $color="#f53232" />
        </Action>
      </BottomBar>
    </Page>
  )
}

export default App
